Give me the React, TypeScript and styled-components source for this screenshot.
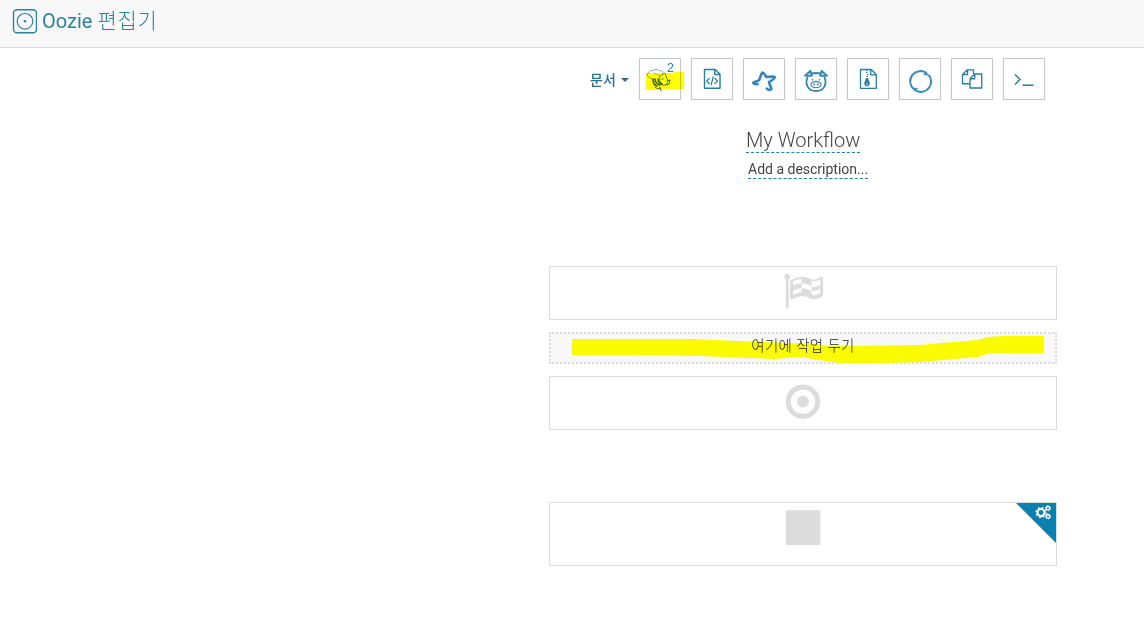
import React from 'react';
import styled, { createGlobalStyle } from 'styled-components';

const BLUE = '#2a7f9f';

const GlobalStyle = createGlobalStyle`
  * { box-sizing: border-box; }
  body {
    margin: 0;
    background: #fff;
    font-family: Roboto, "Noto Sans CJK KR", sans-serif;
    color: #444;
  }
`;

const Page = styled.div`
  width: 1144px;
  height: 635px;
  overflow: hidden;
`;

const Header = styled.header`
  display: flex;
  align-items: center;
  gap: 5px;
  height: 48px;
  padding: 0 0 6px 12px;
  background: #f8f8f8;
  border-bottom: 1px solid #dcdcdc;
`;

const Title = styled.h1`
  margin: 0;
  color: #2d80a0;
  font-size: 20px;
  line-height: 26px;
  font-weight: 400;
  white-space: nowrap;
`;

const TitleKorean = styled.span`
  font-weight: 300;
  font-size: 21px;
  letter-spacing: 0.7px;
`;

const Editor = styled.main`
  display: flex;
  flex-direction: column;
  width: 508px;
  margin-left: 549px;
`;

const Toolbar = styled.nav`
  display: flex;
  align-items: center;
  gap: 10px;
  height: 42px;
  margin: 10px 12px 0 41px;
`;

const DocumentsMenu = styled.button`
  display: flex;
  align-items: center;
  gap: 5px;
  width: 39px;
  height: 32px;
  padding: 2px 0 0;
  border: 0;
  background: none;
  color: #28728f;
  font: 500 14px/20px Roboto, "Noto Sans CJK KR", sans-serif;
  white-space: nowrap;
`;

const Caret = styled.span`
  border: 4px solid transparent;
  border-top-color: #28728f;
  border-bottom: 0;
`;

const ActionButton = styled.button`
  position: relative;
  display: flex;
  flex: none;
  align-items: center;
  justify-content: center;
  width: 42px;
  height: 42px;
  padding: 0;
  border: 1px solid #c4c4c4;
  background: #fff;
  color: ${BLUE};
  svg { display: block; }
`;

const Superscript = styled.span`
  position: absolute;
  top: 2px;
  left: 27px;
  font-size: 12.5px;
  line-height: 14px;
`;

const ButtonMark = styled.svg`
  position: absolute;
  top: 13px;
  left: 6px;
  mix-blend-mode: multiply;
  pointer-events: none;
`;

const Heading = styled.section`
  display: flex;
  flex-direction: column;
  align-items: flex-start;
  height: 166px;
  padding: 28px 0 0 197px;
`;

const WorkflowName = styled.div`
  height: 25px;
  border-bottom: 1px dashed #1b84b0;
  font-size: 20px;
  line-height: 24px;
  font-weight: 300;
  white-space: nowrap;
`;

const Description = styled.div`
  height: 18px;
  margin: 8px 0 0 2px;
  border-bottom: 1px dashed #1b84b0;
  font-size: 14px;
  line-height: 17px;
  white-space: nowrap;
`;

const Node = styled.div<{ $height?: number; $gap?: number }>`
  display: flex;
  justify-content: center;
  position: relative;
  height: ${p => p.$height ?? 54}px;
  margin-top: ${p => p.$gap ?? 0}px;
  padding-top: 4px;
  border: 1px solid #dcdcdc;
  color: #dcdcdc;
`;

const DropZone = styled.div`
  position: relative;
  height: 32px;
  margin: 12px 0;
  border: 2px dotted #dcdcdc;
  background: #f8f8f8;
  color: #222;
  font-size: 14.5px;
  letter-spacing: 0.35px;
  line-height: 26px;
  font-weight: 300;
  text-align: center;
`;

const DropLabel = styled.span`
  position: relative;
`;

const DropMark = styled.svg`
  position: absolute;
  top: -2px;
  left: -2px;
`;

const Corner = styled.div`
  position: absolute;
  top: 0;
  right: 0;
  display: flex;
  justify-content: flex-end;
  width: 40px;
  height: 40px;
  padding: 1px 4px 0 0;
  background: #0b7fad;
  clip-path: polygon(0 0, 100% 0, 100% 100%);
  color: #fff;
`;

const OozieLogo = () => (
  <svg width="25" height="26" viewBox="0 0 25 26" fill="none" stroke="#2d80a0" strokeWidth="1.4">
    <rect x="1.5" y="1.7" width="23" height="23" rx="3.5" />
    <circle cx="13" cy="13.3" r="7.8" strokeWidth="1.2" />
    <circle cx="13" cy="13.3" r="1.3" fill="#2d80a0" stroke="none" />
  </svg>
);

const BeeIcon = () => (
  <svg width="40" height="40" viewBox="0 0 40 40" fill="none" strokeLinecap="round" strokeLinejoin="round">
    <path d="M12 20c-3-1-5-3-5-5 1-1 2-1 2-1 0-2 2-3 4-2 1-2 5-2 6 0 2-1 4 0 4 2" stroke="#8e9ec7" strokeWidth="1" />
    <path d="M14 14l6 3" stroke="#a2b65c" strokeWidth=".8" />
    <path d="M20 17l5-3 1 3 2 5-2 4-4 0-2-4z" stroke="#6f9438" strokeWidth="1" />
    <path d="M27 22l3-1-1 4-3 1M22 20l1 0" stroke="#4b6e38" strokeWidth="1" />
    <path d="M13 20c0 4 1 6 4 7M15 20c0 3 2 5 5 6M18 20c0 2 1 4 4 5" stroke="#255827" strokeWidth="1.5" />
    <path d="M15 28c2 2 3 2 5 1M20 28l1 4" stroke="#4b6e39" />
  </svg>
);

const FileCodeIcon = () => (
  <svg width="40" height="40" viewBox="0 0 40 40" fill="none" stroke={BLUE} strokeWidth="1.4" strokeLinejoin="round">
    <path d="M12.500 10.500h10.700L28 15.300V29.300H12.500zM22.700 10.500v5H28" />
    <path d="M17.600 19L14.800 22l2.800 3m5-6l2.800 3-2.800 3M21.300 17.500l-2.200 8.800" strokeWidth="1.200" />
  </svg>
);

const StarIcon = () => (
  <svg width="40" height="40" viewBox="0 0 40 40" fill="none" stroke="#3484bd" strokeWidth="2.600" strokeLinecap="round" strokeLinejoin="round">
    <path d="M13.500 25.200c-2 .2-3.800-.2-4.300-1.400.5-1 4.500-1.200 6-3 1-1.500 1.500-6 3.300-7.200 1.700 0 2.500 2.500 3.700 4.300 3 0 7-.8 8.600.2-.3 2-3.700 3.700-5.800 5 .3 2.500 2.600 5.300 2.300 7.200-1.600 1.100-3.500.3-4.500-.7" />
  </svg>
);

const PigIcon = () => (
  <svg width="40" height="40" viewBox="0 0 40 40" fill="none" stroke="#3484ad" strokeWidth="1.800" strokeLinejoin="round">
    <path d="M11.700 17.500C8.500 25 12 32 20 32s11.500-7 8.300-14.500M15.500 14.500q4.500-1 9 0" />
    <path d="M9 16.700l5.400-4.900 1.500 5zM31 16.700l-5.400-4.900-1.500 5z" fill="#3484ad" fillOpacity=".35" />
    <ellipse cx="20" cy="25.500" rx="5" ry="3.200" strokeWidth="1.200" />
    <path d="M18.200 24.300v2.400m3.600-2.400v2.400M16.500 20v1.500m7-1.500v1.500" strokeWidth="1.300" />
  </svg>
);

const ArchiveIcon = () => (
  <svg width="40" height="40" viewBox="0 0 40 40" fill="none" stroke={BLUE} strokeWidth="1.300" strokeLinejoin="round">
    <path d="M12.500 10.500h10.700L28.300 15.500V29.300H12.500zM22.700 10.500v5.300h5.600" />
    <path d="M18 11.500h1.500m0 2H18m2.500 2H19m1 2h-1.500" strokeWidth="1.200" />
    <path d="M18 19h2l1.700 4.800a2.800 2.800 0 1 1-5.400 0z" fill={BLUE} stroke="none" />
    <path d="M18 25.100h2" stroke="#fff" strokeWidth=".8" />
  </svg>
);

const RefreshIcon = () => (
  <svg width="40" height="40" viewBox="0 0 40 40" fill="none" stroke="#388bc0" strokeWidth="2">
    <path d="M26.300 13.900A10.300 10.300 0 0 0 13.100 29.600M15.500 31.400A10.300 10.300 0 0 0 28.500 15.700" />
    <path d="M23 16l3.500-3.500 2 4zM18.200 29l-4 3.500-2-4z" fill="#388bc0" stroke="none" />
  </svg>
);

const CopyIcon = () => (
  <svg width="40" height="40" viewBox="0 0 40 40" fill="none" stroke={BLUE} strokeWidth="1.350" strokeLinejoin="round">
    <path d="M18 24.700H10.500V15.500l4.800-4.700H21.500v4.100M15.500 10.800v4.700h-5" />
    <path d="M22.700 15h7v14H18v-9.300zM22.700 15v4.700H18" />
  </svg>
);

const TerminalIcon = () => (
  <svg width="40" height="40" viewBox="0 0 40 40" fill="none" stroke={BLUE} strokeWidth="1.500">
    <path d="M11 15.500l5 5-5 5M18.500 26.300h11" />
  </svg>
);

const FlagIcon = () => (
  <svg width="40" height="40" viewBox="0 0 1792 1792" fill="currentColor">
    <path d="M832 536v-192q-181 16-384 117v185q205-96 384-110zm0 418v-197q-172 8-384 126v189q215-111 384-118zm832-394v-184q-235 116-384 71v224q-20-6-39-15-5-3-33-17t-34.500-17-31.500-15-34.500-15.500-32.500-13-36-12.500-35-8.500-39.500-7.500-39.500-4-44-2q-23 0-49 3v222h19q102 0 192.500 29t197.500 82q19 9 39 15v-188q42 17 91 17 120 0 293-92zm0 427v-189q-169 91-306 91-45 0-78-8v196q148 42 384-90zm-1344-731q0 35-17.500 64t-46.500 46v1266q0 14-9 23t-23 9h-64q-14 0-23-9t-9-23v-1266q-29-17-46.500-46t-17.500-64q0-53 37.500-90.500t90.500-37.500 90.500 37.500 37.500 90.500zm1472 64v763q0 39-35 57-10 5-17 9-218 116-369 116-88 0-158-35l-28-14q-64-33-99-48t-91-29-114-14q-102 0-235.500 44t-228.500 102q-15 9-33 9-16 0-32-8-32-19-32-56v-742q0-35 31-55 35-21 78.500-42.500t114-52 152.500-49.500 155-19q112 0 209 31t209 86q38 19 89 19 122 0 310-112 22-12 31-17 31-16 62 2 31 20 31 55z" />
  </svg>
);

const TargetIcon = () => (
  <svg width="40" height="40" viewBox="0 0 40 40">
    <circle cx="20" cy="20.700" r="14.700" fill="none" stroke="currentColor" strokeWidth="5" />
    <circle cx="20" cy="20.700" r="5.900" fill="currentColor" />
  </svg>
);

const StopIcon = () => (
  <svg width="40" height="40" viewBox="0 0 40 40">
    <rect x="2.700" y="3.300" width="34.700" height="34.700" rx="1.500" fill="currentColor" />
  </svg>
);

const GearsIcon = () => (
  <svg width="17" height="17" viewBox="0 0 17 17" fill="none" stroke="currentColor">
    <circle cx="6" cy="8.500" r="3.500" strokeWidth="2.200" />
    <circle cx="6" cy="8.500" r="5" strokeWidth="1.300" strokeDasharray="1.960 1.967" />
    <circle cx="13" cy="4.200" r="1.700" strokeWidth="1.400" />
    <circle cx="13" cy="4.200" r="2.600" strokeWidth="1" strokeDasharray="1.300 1.423" />
    <circle cx="13" cy="12.400" r="1.700" strokeWidth="1.400" />
    <circle cx="13" cy="12.400" r="2.600" strokeWidth="1" strokeDasharray="1.300 1.423" />
  </svg>
);

const actions = [FileCodeIcon, StarIcon, PigIcon, ArchiveIcon, RefreshIcon, CopyIcon, TerminalIcon];

export default function App() {
  return (
    <Page>
      <GlobalStyle />
      <Header>
        <OozieLogo />
        <Title>Oozie <TitleKorean>편집기</TitleKorean></Title>
      </Header>
      <Editor>
        <Toolbar>
          <DocumentsMenu>문서<Caret /></DocumentsMenu>
          <ActionButton>
            <BeeIcon />
            <Superscript>2</Superscript>
            <ButtonMark width="40" height="20" viewBox="0 0 40 20">
              <path d="M0 1h27v-1h11v17H17v1H0z" fill="#ff0" />
            </ButtonMark>
          </ActionButton>
          {actions.map((Icon, i) => <ActionButton key={i}><Icon /></ActionButton>)}
        </Toolbar>
        <Heading>
          <WorkflowName>My Workflow</WorkflowName>
          <Description>Add a description...</Description>
        </Heading>
        <Node><FlagIcon /></Node>
        <DropZone>
          <DropMark width="508" height="32" viewBox="0 0 508 32">
            <path d="M23 7H142L210 10L265 12L282 14L310 14L370 13L405 10L428 8L440 5L452 4H494V21H450L438 22L428 25L405 27L372 30L335 31H290L270 28L252 25L225 27L200 26L150 24L85 23H23z" fill="#fafa00" />
          </DropMark>
          <DropLabel>여기에 작업 두기</DropLabel>
        </DropZone>
        <Node><TargetIcon /></Node>
        <Node $height={64} $gap={72}>
          <StopIcon />
          <Corner><GearsIcon /></Corner>
        </Node>
      </Editor>
    </Page>
  );
}
